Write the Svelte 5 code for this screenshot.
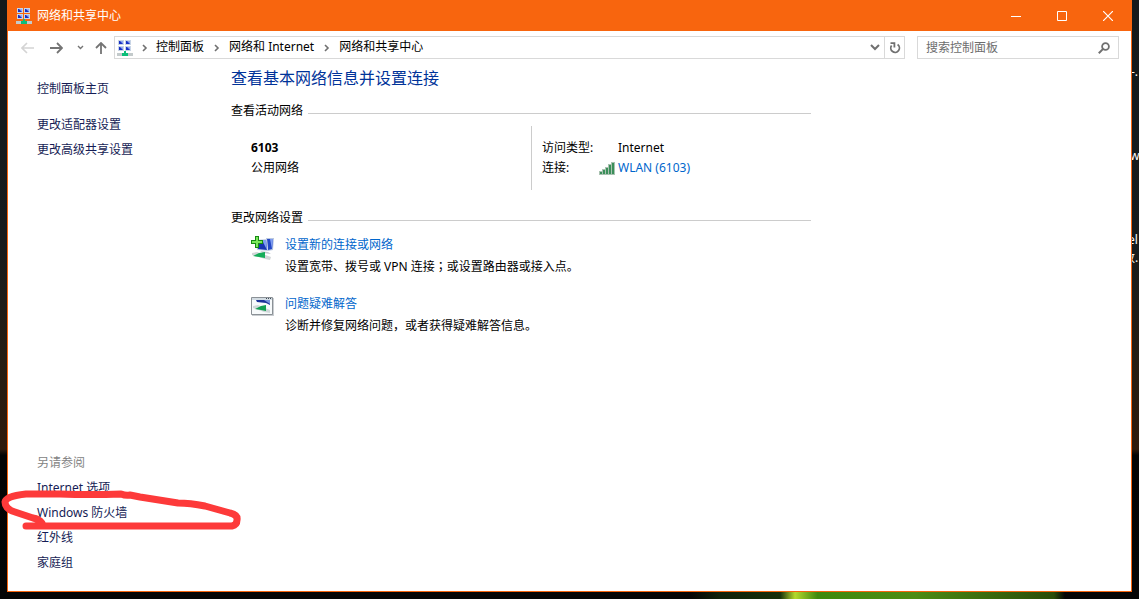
<script>
    let keyword = '';

    const crumbs = ['控制面板', '网络和 Internet', '网络和共享中心'];
    const sideLinks = ['更改适配器设置', '更改高级共享设置'];
    const seeAlso = ['Internet 选项', 'Windows 防火墙', '红外线', '家庭组'];
    const tasks = [
        { icon: 'new', title: '设置新的连接或网络', desc: ['设置宽带、拨号或 VPN 连接', '；', '或设置路由器或接入点。'] },
        { icon: 'fix', title: '问题疑难解答', desc: ['诊断并修复网络问题，或者获得疑难解答信息。', '', ''] }
    ];
    const screens = [[1, 0], [8, 0], [1, 6], [8, 6]];
</script>

{#snippet netIcon()}
    <svg class="net_icon" width="16" height="16" viewBox="0 0 16 16" aria-hidden="true">
        {#each screens as [x, y]}
            <rect {x} {y} width="6" height="5" fill="#c9d5e6" />
            <rect x={x + 1} y={y + 1} width="4" height="3" fill="#1730c4" />
            <path d="M{x + 2} {y + 1}h3v3z" fill="#8fa8f0" />
        {/each}
        <path d="M0 13h16v3H0z" fill="#c3cacb" />
        <path d="M7 11h2v2h2v3H5v-3h2z" fill="#0bbf79" />
    </svg>
{/snippet}

{#snippet chevron()}
    <svg width="6" height="8" viewBox="0 0 6 8" aria-hidden="true"><path d="M1 1l3 3-3 3" fill="none" stroke="#707070" stroke-width="1.6" /></svg>
{/snippet}

<div class="desktop">
    <span class="label l1">-.</span>
    <span class="label l2">w</span>
    <span class="label l3">el</span>
    <span class="label l4">致.</span>

    <div class="window">
        <header class="title_bar">
            {@render netIcon()}
            <span class="title">网络和共享中心</span>
            <button type="button" aria-label="最小化"><svg width="10" height="10"><path d="M0 5.5h10" stroke="#fff" /></svg></button>
            <button type="button" aria-label="最大化"><svg width="10" height="10"><path d="M.5.5h9v9h-9z" fill="none" stroke="#fff" /></svg></button>
            <button type="button" aria-label="关闭"><svg width="10" height="10"><path d="M0 0l10 10M10 0L0 10" stroke="#fff" stroke-width="1.2" /></svg></button>
        </header>

        <nav class="nav_bar">
            <div class="arrows">
                <button type="button" aria-label="后退" disabled><svg width="13" height="12" viewBox="0 0 13 12"><path d="M6 1L1 6l5 5M1 6h12" fill="none" stroke="#d4d4d4" stroke-width="1.6" /></svg></button>
                <button type="button" aria-label="前进"><svg width="13" height="12" viewBox="0 0 13 12"><path d="M7 1l5 5-5 5M12 6H0" fill="none" stroke="#747474" stroke-width="1.8" /></svg></button>
                <button type="button" class="recent" aria-label="最近位置"><svg width="7" height="5" viewBox="0 0 7 5"><path d="M1 1l2.5 2.5L6 1" fill="none" stroke="#747474" stroke-width="1.4" /></svg></button>
                <button type="button" class="up" aria-label="上移"><svg width="12" height="12" viewBox="0 0 12 12"><path d="M1 6l5-5 5 5M6 1v11" fill="none" stroke="#747474" stroke-width="1.8" /></svg></button>
            </div>
            <div class="address">
                {@render netIcon()}
                {#each crumbs as crumb}
                    <span class="sep">{@render chevron()}</span>
                    <a href="#top">{crumb}</a>
                {/each}
                <button type="button" class="drop" aria-label="以前的位置"><svg width="10" height="7" viewBox="0 0 10 7"><path d="M1 1l4 4 4-4" fill="none" stroke="#707070" stroke-width="2" /></svg></button>
                <button type="button" class="refresh" aria-label="刷新"><svg width="12" height="12" viewBox="0 0 12 12"><path d="M8.6 2.6A4.3 4.3 0 1 1 2.6 3.6" fill="none" stroke="#707070" stroke-width="1.8" /><path d="M1.5 1.2H5.4V5.4" fill="none" stroke="#707070" stroke-width="1.8" /></svg></button>
            </div>
            <div class="search">
                <input type="text" bind:value={keyword} placeholder="搜索控制面板" aria-label="搜索控制面板" />
                <svg width="12" height="12" viewBox="0 0 12 12" aria-hidden="true"><circle cx="7.5" cy="4.5" r="3.4" fill="none" stroke="#707070" stroke-width="1.8" /><path d="M5.1 6.9L.8 11.2" stroke="#707070" stroke-width="2" /></svg>
            </div>
        </nav>

        <div class="content">
            <aside>
                <div class="side_top">
                    <a class="home" href="#home">控制面板主页</a>
                    {#each sideLinks as link}
                        <a href="#side">{link}</a>
                    {/each}
                </div>
                <div class="see_also">
                    <span>另请参阅</span>
                    {#each seeAlso as link, i}
                        <a href="#see">{link}</a>
                        {#if i == 1}
                            <svg class="marker" width="242" height="42" viewBox="0 488 242 42" aria-hidden="true">
                                <path d="M26 526H232Q237 525 237 520Q238 515 230 513L205 506Q190 503 178 503L140 497L130 495Q126 496 121 494Q90 495 60 494L26 494Q6 496 5 502Q5 509 15 512L33 518Q39 519 42 523" />
                            </svg>
                        {/if}
                    {/each}
                </div>
            </aside>

            <main>
                <h1>查看基本网络信息并设置连接</h1>
                <h2>查看活动网络</h2>
                <div class="active">
                    <div class="network">
                        <strong>6103</strong>
                        <span>公用网络</span>
                    </div>
                    <dl>
                        <dt>访问类型:</dt>
                        <dd>Internet</dd>
                        <dt>连接:</dt>
                        <dd>
                            <svg class="signal" width="16" height="13" viewBox="0 0 16 13" aria-hidden="true">
                                <path d="M0 9h3v4H0zM3 7h3v6H3zM6 5h3v8H6zM9 2h3v11H9zM12 0h4v13h-4z" fill="#a9c2b1" />
                                <path d="M1 10h2v2H1zM4 8h2v4H4zM7 6h2v6H7zM10 3h2v9h-2zM13 1h2v11h-2z" fill="#3b8f5a" />
                            </svg>
                            <a href="#wlan">WLAN (6103)</a>
                        </dd>
                    </dl>
                </div>
                <h2>更改网络设置</h2>
                <div class="tasks">
                    {#each tasks as task}
                        <section>
                            {#if task.icon == 'new'}
                                <svg width="24" height="24" viewBox="0 0 24 24" aria-hidden="true">
                                    <path d="M15 2h8l-1 12-5 1z" fill="#b9c7df" />
                                    <path d="M16 3h6l-1 10-4 1z" fill="#2447c4" />
                                    <path d="M19 3h3l-1 10z" fill="#7f9df0" />
                                    <path d="M4 4l12-1 1 12-11-1z" fill="#c4d0e6" />
                                    <path d="M5 5l10-1 1 10-9-1z" fill="#1735b2" />
                                    <path d="M11 4h4l1 10z" fill="#7f9df0" />
                                    <path d="M9 15l8 1 3 2-8-1z" fill="#c3c9d1" />
                                    <path d="M1 17l5-1 14 5-1 3-5-1L1 19z" fill="#d2d6d8" />
                                    <path d="M2 20l6-3 6-1v6l-6-1z" fill="#16ad5a" />
                                    <path d="M4 0h4v4h4v4H8v4H4V8H0V4h4z" fill="#168a13" />
                                    <path d="M5 1h2v4h4v2H7v4H5V7H1V5h4z" fill="#7ae85a" />
                                </svg>
                            {:else}
                                <svg width="24" height="24" viewBox="0 0 24 24" aria-hidden="true">
                                    <path d="M1 3h22v18H1z" fill="#c9cdd1" />
                                    <path d="M.5 2.5h21v17H.5z" fill="#f7fafb" stroke="#8b9196" />
                                    <path d="M1 3h20v2H1z" fill="#d3dce3" />
                                    <path d="M15 3h1v1h-1zM17 3h1v1h-1zM19 3h1v1h-1z" fill="#3f4b57" />
                                    <path d="M5 5h14v5l-4-2-9-1z" fill="#1b329a" />
                                    <path d="M13 5h6v4z" fill="#7792dc" />
                                    <path d="M2 11l5-1 12 5v3l-6-1-11-4z" fill="#d1d8da" />
                                    <path d="M4 14l6-3 5-1v6l-5-1z" fill="#12a052" />
                                </svg>
                            {/if}
                            <div>
                                <a href="#task">{task.title}</a>
                                <p>{task.desc[0]}<span class="mid">{task.desc[1]}</span>{task.desc[2]}</p>
                            </div>
                        </section>
                    {/each}
                </div>
            </main>
        </div>
    </div>
</div>

<style>
    :global(body){margin:0;background:#050505}
    .desktop{
        position:relative;
        box-sizing:border-box;
        display:flex;
        min-height:100vh;
        padding:0 7px 7px;
        overflow:hidden;
        font:12px/20px "Noto Sans", "Noto Sans CJK SC", sans-serif;
        color:#000;
        background:
            linear-gradient(90deg, transparent, #10220a 8%, #16300a 24%, #b5d92c 28%, #3f8a0c 34%, #4d8c14 60%, #2a4d08 97%, transparent) 690px 100% / 375px 7px no-repeat,
            linear-gradient(#14191b 0, #171b1d 40%, #251d13 60%, #2f1a0c 75%, #040404 76%, #050505 100%);
    }
    .label{position:absolute;color:#fff;line-height:16px;white-space:nowrap}
    .l1{top:64px;left:1131px}
    .l2{top:148px;left:1130px}
    .l3{top:232px;left:1128px}
    .l4{top:250px;left:1123px}
    .window{
        position:relative;
        flex:1;
        box-sizing:border-box;
        display:flex;
        flex-direction:column;
        border:1px solid #f8650e;
        border-top:0;
        background:#fff;
    }
    a{color:inherit;text-decoration:none}
    button{
        display:flex;
        align-items:center;
        justify-content:center;
        padding:0;
        border:0;
        background:none;
    }
    svg{display:block;flex:none}

    .title_bar{
        display:flex;
        align-items:center;
        height:31px;
        padding-left:8px;
        background:#f8650e;
        color:#fff;
    }
    .title{flex:1;margin-left:5px}
    .title_bar button{width:46px;height:30px}

    .nav_bar{display:flex;padding:5px 12px 0 9px}
    .arrows{display:flex;align-items:center;width:97px}
    .arrows button{width:20px;height:20px}
    .arrows button + button{margin-left:9px}
    .arrows .recent{width:10px}
    .arrows button.up{margin-left:6px}
    .address, .search{
        box-sizing:border-box;
        display:flex;
        align-items:center;
        height:23px;
        border:1px solid #d9d9d9;
    }
    .address{flex:1;padding-left:2px;white-space:nowrap}
    .address a{margin-bottom:1px}
    .sep{display:flex;justify-content:center;width:25px}
    .address .net_icon + .sep{width:23px}
    .drop{width:19px;height:21px;margin-left:auto}
    .refresh{width:20px;height:21px;border-left:1px solid #d9d9d9}
    .search{width:202px;margin-left:12px;padding:0 8px}
    .search input{
        flex:1;
        min-width:0;
        padding:0;
        border:0;
        outline:0;
        background:none;
        font:inherit;
    }
    .search input::placeholder{color:#6d6d6d;opacity:1}

    .content{flex:1;display:flex}
    aside{
        box-sizing:border-box;
        display:flex;
        flex-direction:column;
        justify-content:space-between;
        width:223px;
        padding:17px 0 16px 29px;
        line-height:25px;
        color:#151c55;
    }
    .side_top, .see_also{display:flex;flex-direction:column;align-items:flex-start}
    .home{margin-bottom:11px}
    .see_also span{color:#838383}
    .marker{position:absolute;left:-8px;bottom:61px;pointer-events:none}
    .marker path{fill:none;stroke:#fd3a3a;stroke-width:7;stroke-linecap:round;stroke-linejoin:round}

    main{flex:1;max-width:580px;padding-top:7px}
    h1{margin:0;font-size:16px;font-weight:400;line-height:24px;color:#003399}
    h2{display:flex;align-items:center;gap:5px;margin:11px 0 0;font-size:12px;font-weight:400;line-height:20px}
    h2::after{content:"";flex:1;height:1px;margin-top:5px;background:#ccc}
    .active{display:flex;height:64px;margin:5px 0 18px}
    .network{
        box-sizing:border-box;
        display:flex;
        flex-direction:column;
        width:301px;
        padding:12px 0 0 20px;
        border-right:1px solid #ccc;
    }
    dl{
        display:grid;
        grid-template-columns:76px auto;
        align-content:start;
        margin:0;
        padding:12px 0 0 10px;
    }
    dd{display:flex;align-items:center;margin:0}
    .signal{margin-left:-19px;margin-right:3px}
    dd a, .tasks a{color:#0066cc}
    .tasks{padding:7px 0 0 20px}
    section{display:flex;gap:10px;margin-bottom:17px}
    section svg{margin-top:1px}
    section a{display:block;line-height:20px}
    section p{margin:2px 0 0;line-height:20px}
    .mid{font-family:"Noto Sans CJK TC", sans-serif;line-height:12px}
</style>
